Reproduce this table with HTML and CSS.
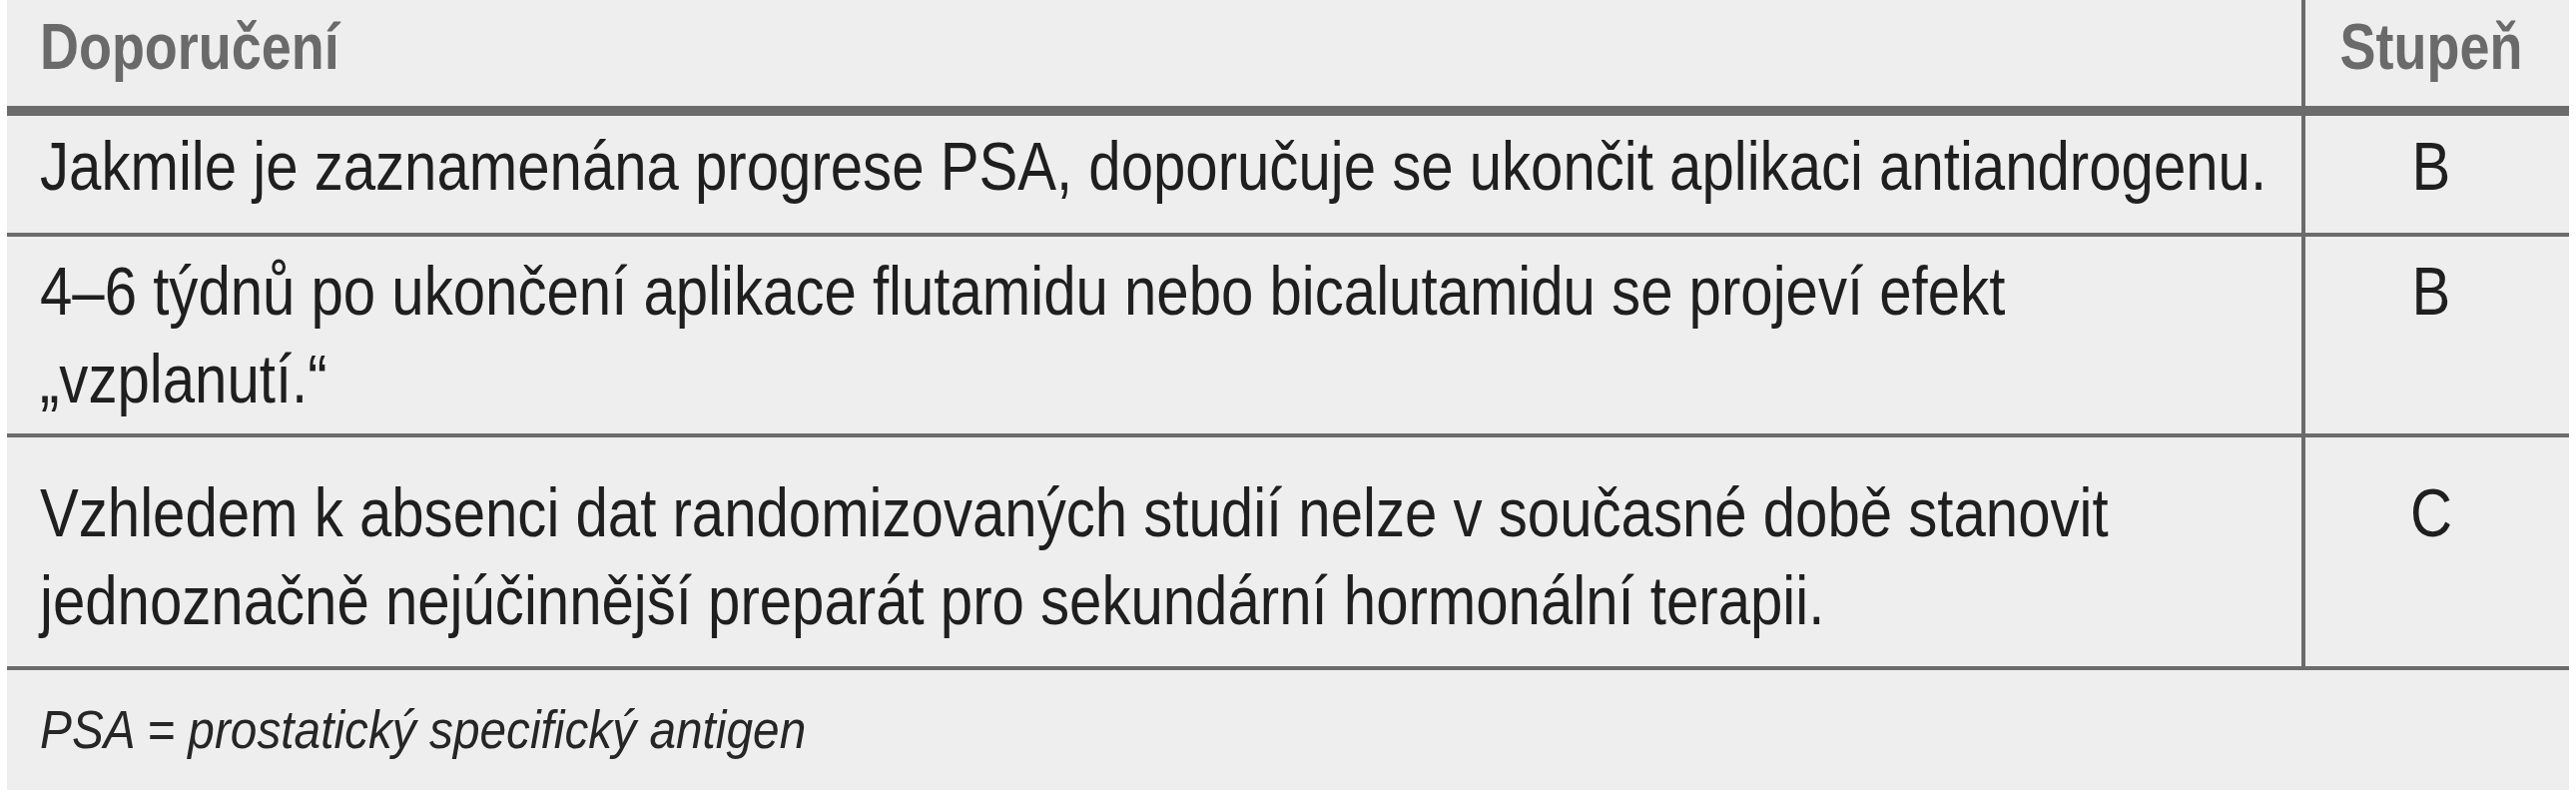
FILE: index.html
```html
<!DOCTYPE html>
<html lang="cs">
<head>
<meta charset="utf-8">
<title>Doporučení</title>
<link rel="stylesheet" href="styles.css">
</head>
<body>
<table class="rec-table">
  <thead>
    <tr class="head-row">
      <th class="col-text"><span class="cond">Doporučení</span></th>
      <th class="col-grade"><span class="cond">Stupeň</span></th>
    </tr>
  </thead>
  <tbody>
    <tr class="row row-1">
      <td class="col-text"><span class="cond">Jakmile je zaznamenána progrese PSA, doporučuje se ukončit aplikaci antiandrogenu.</span></td>
      <td class="col-grade"><span class="cond">B</span></td>
    </tr>
    <tr class="row row-2">
      <td class="col-text"><span class="cond">4–6 týdnů po ukončení aplikace flutamidu nebo bicalutamidu se projeví efekt<br>„vzplanutí.“</span></td>
      <td class="col-grade"><span class="cond">B</span></td>
    </tr>
    <tr class="row row-3">
      <td class="col-text"><span class="cond">Vzhledem k absenci dat randomizovaných studií nelze v současné době stanovit<br>jednoznačně nejúčinnější preparát pro sekundární hormonální terapii.</span></td>
      <td class="col-grade"><span class="cond">C</span></td>
    </tr>
  </tbody>
  <tfoot>
    <tr class="foot-row">
      <td colspan="2"><span class="cond">PSA = prostatický specifický antigen</span></td>
    </tr>
  </tfoot>
</table>
</body>
</html>
```

FILE: styles.css
```css
html, body {
  margin: 0;
  padding: 0;
  background: #ffffff;
}

body {
  padding: 0 7px;
  font-family: "Liberation Sans", Arial, sans-serif;
  color: #1f1f1f;
}

.rec-table {
  width: 2566px;
  border-collapse: collapse;
  background: #eeeeee;
  table-layout: fixed;
}

.rec-table th,
.rec-table td {
  padding: 0;
  vertical-align: top;
  text-align: left;
}

/* No condensed face is installed: the text is narrowed to imitate
   the condensed grotesque of the original table. */
.cond {
  display: block;
  white-space: nowrap;
  transform: scaleX(0.855);
  transform-origin: 0 0;
}

.rec-table .col-text {
  padding-left: 33px;
}

.rec-table .col-grade {
  width: 252px;
  padding-right: 12px;
  text-align: center;
  border-left: 4px solid #6b6b6b;
}

.col-grade .cond {
  transform-origin: 50% 0;
}

.head-row th {
  font-size: 65px;
  line-height: 88px;
  font-weight: bold;
  color: #6a6a6a;
  padding-top: 3px;
  padding-bottom: 15px;
  border-bottom: 10px solid #6b6b6b;
}

.head-row .cond {
  transform: scaleX(0.83);
}

.row td {
  font-size: 68px;
  line-height: 88px;
  border-bottom: 4px solid #6b6b6b;
}

.row-1 td {
  padding-top: 6px;
  padding-bottom: 23px;
}

.row-2 td {
  padding-top: 10px;
  padding-bottom: 11px;
}

.row-3 td {
  padding-top: 31px;
  padding-bottom: 22px;
}

.rec-table .foot-row td {
  font-size: 54px;
  line-height: 70px;
  font-style: italic;
  color: #262626;
  padding: 24px 0 26px 33px;
}

.foot-row .cond {
  transform: scaleX(0.885);
}
```
